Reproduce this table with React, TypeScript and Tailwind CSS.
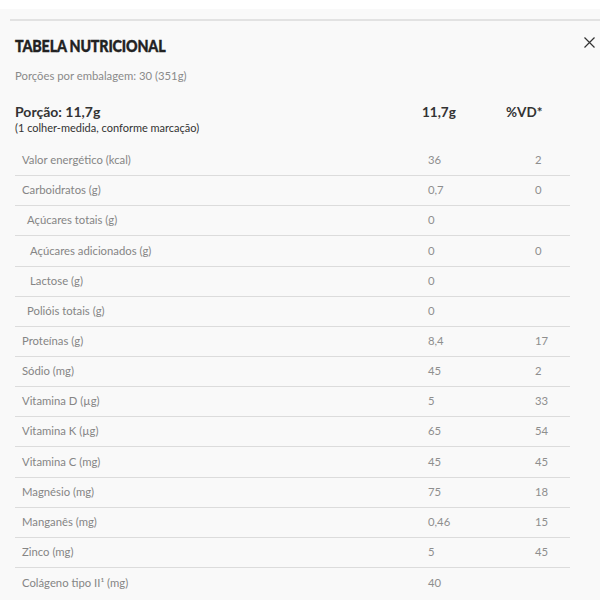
// Nutrition facts modal — a label column plus portion / %VD columns, with
// sub-items (sugars, lactose, polyols) indented under carbohydrates.

type Row = { label: string; value: string; vd?: string; indent?: string };

const ROWS: Row[] = [
  { label: "Valor energético (kcal)", value: "36", vd: "2" },
  { label: "Carboidratos (g)", value: "0,7", vd: "0" },
  { label: "Açúcares totais (g)", value: "0", indent: "pl-[12px]" },
  { label: "Açúcares adicionados (g)", value: "0", vd: "0", indent: "pl-[15px]" },
  { label: "Lactose (g)", value: "0", indent: "pl-[15px]" },
  { label: "Polióis totais (g)", value: "0", indent: "pl-[12px]" },
  { label: "Proteínas (g)", value: "8,4", vd: "17" },
  { label: "Sódio (mg)", value: "45", vd: "2" },
  { label: "Vitamina D (µg)", value: "5", vd: "33" },
  { label: "Vitamina K (µg)", value: "65", vd: "54" },
  { label: "Vitamina C (mg)", value: "45", vd: "45" },
  { label: "Magnésio (mg)", value: "75", vd: "18" },
  { label: "Manganês (mg)", value: "0,46", vd: "15" },
  { label: "Zinco (mg)", value: "5", vd: "45" },
  { label: "Colágeno tipo II¹ (mg)", value: "40" },
];

function CloseIcon() {
  return (
    <svg width="11" height="11" viewBox="0 0 11 11" className="text-[#333]">
      <path d="M0.5 0.5L10.5 10.5M10.5 0.5L0.5 10.5" stroke="currentColor" strokeWidth="1.2" />
    </svg>
  );
}

export default function App() {
  return (
    <div className="h-[600px] w-[600px] overflow-hidden bg-white pt-[9px] font-['Lato',sans-serif]">
      <div className="h-full bg-[#f9f9f9] pt-[10px]">
        <div className="ml-[10px] border-t-2 border-[#e2e2e2]" />

        <div className="relative pl-[15px] pt-[13px]">
          <h2 className="inline-block origin-left scale-x-[0.84] text-[17px] font-black leading-[20px] tracking-[-0.2px] text-[#222] [-webkit-text-stroke:0.4px_#222]">
            TABELA NUTRICIONAL
          </h2>
          <button className="absolute right-[5px] top-[16px]">
            <CloseIcon />
          </button>

          <p className="mt-[11px] text-[11.3px] leading-[14px] text-[#8a8a8a]">
            Porções por embalagem: 30 (351g)
          </p>

          <div className="mt-[20px] grid grid-cols-[407px_84px_1fr] items-start text-[#333]">
            <div>
              <p className="text-[14px] font-bold leading-[18px]">Porção: 11,7g</p>
              <p className="text-[11px] leading-[14px]">(1 colher-medida, conforme marcação)</p>
            </div>
            <p className="text-[13.5px] font-bold leading-[18px]">11,7g</p>
            <p className="text-[13.5px] font-bold leading-[18px]">%VD*</p>
          </div>

          <div className="mt-[11px] w-[555px]">
            {ROWS.map((r) => (
              <div
                key={r.label}
                className="grid h-[30.15px] grid-cols-[413px_107px_1fr] items-center border-b border-[#dcdcdc] text-[11.3px] text-[#858585] last:border-b-0"
              >
                <span className={r.indent ?? "pl-[7px]"}>{r.label}</span>
                <span className="text-[#8e8e8e]">{r.value}</span>
                <span className="text-[#8e8e8e]">{r.vd ?? ""}</span>
              </div>
            ))}
          </div>
        </div>
      </div>
    </div>
  );
}
